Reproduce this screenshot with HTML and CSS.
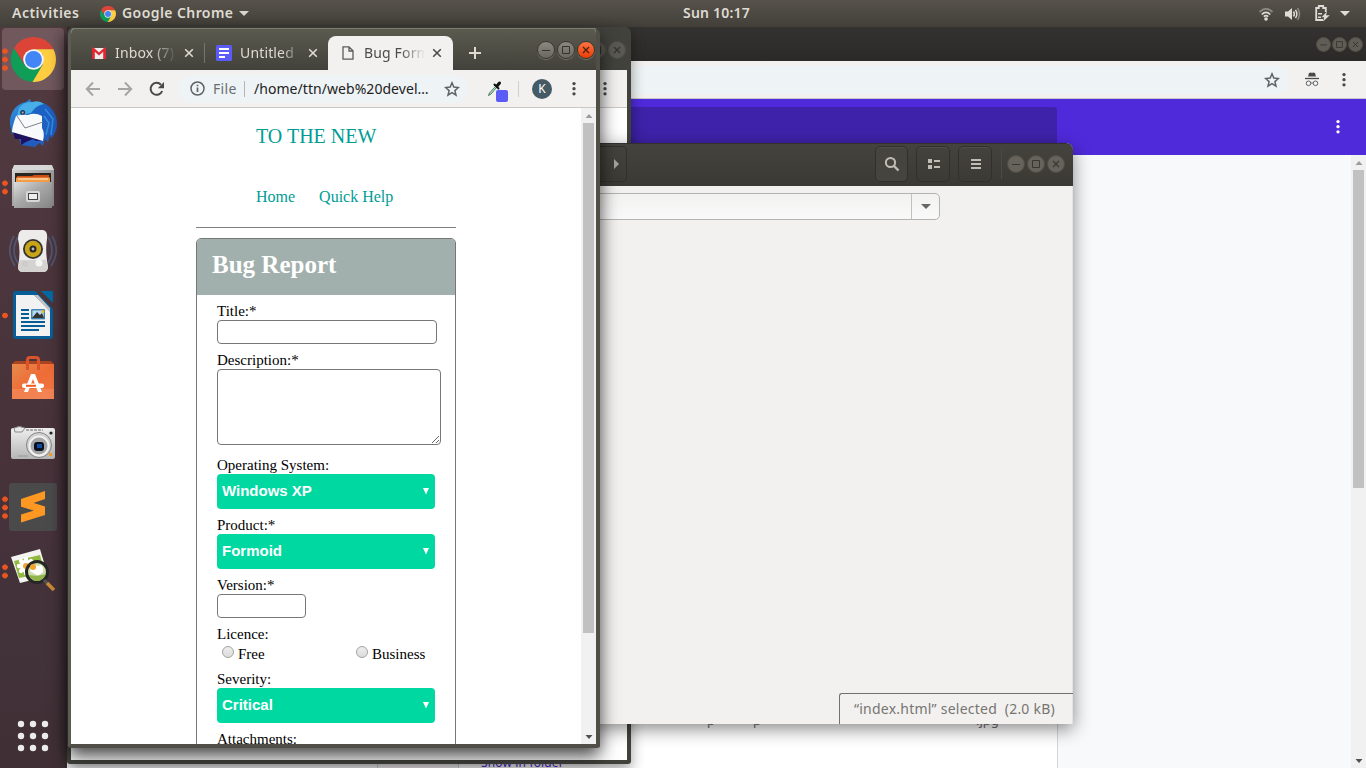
FILE: index.html
```html
<!DOCTYPE html>
<html lang="en">
<head>
<meta charset="utf-8">
<title>Bug Form</title>
<link rel="stylesheet" href="styles.css">
</head>
<body>
<svg width="0" height="0" class="defs" aria-hidden="true">
  <defs>
    <linearGradient id="metal" x1="0" y1="0" x2="1" y2="1"><stop offset="0" stop-color="#dcdcdc"/><stop offset=".45" stop-color="#a8a8a8"/><stop offset="1" stop-color="#858585"/></linearGradient>
    <linearGradient id="silver" x1="0" y1="0" x2="0" y2="1"><stop offset="0" stop-color="#efefef"/><stop offset="1" stop-color="#b5b5b5"/></linearGradient>
    <linearGradient id="bird" x1="0" y1="0" x2="1" y2="1"><stop offset="0" stop-color="#3ba5e4"/><stop offset=".4" stop-color="#1b62c4"/><stop offset="1" stop-color="#2858b8"/></linearGradient>
    <linearGradient id="bag" x1="0" y1="0" x2="1" y2="1"><stop offset="0" stop-color="#e58a4c"/><stop offset=".5" stop-color="#ef6c36"/><stop offset="1" stop-color="#f07a45"/></linearGradient>
    <symbol id="chrome" viewBox="0 0 48 48">
      <path fill="#db4437" d="M3.2 12A24 24 0 0 1 44.8 12Q46 14 46 13H24L14.5 29Z"/>
      <path fill="#0f9d58" d="M3.2 12A24 24 0 0 0 24 48L33.5 30H14.5Z"/>
      <path fill="#ffcd40" d="M45.3 13A24 24 0 0 1 23 48L33.5 30 34 19 24 13Z"/>
      <circle cx="24" cy="24" r="11" fill="#f4f5f7"/><circle cx="24" cy="24" r="9" fill="#4285f4"/>
    </symbol>
    <symbol id="close" viewBox="0 0 10 10"><path d="M1.2 1.2 8.8 8.8M8.8 1.2 1.2 8.8" fill="none" stroke="currentColor" stroke-width="1.6"/></symbol>
    <symbol id="star" viewBox="0 0 16 16"><path d="M8 1.8 9.8 6.1 14.4 6.5 10.9 9.6 12 14.1 8 11.6 4 14.1 5.1 9.6 1.6 6.5 6.2 6.1Z" fill="none" stroke="#5f6368" stroke-width="1.5"/></symbol>
    <symbol id="dots" viewBox="0 0 4 16"><circle cx="2" cy="2.6" r="1.65" fill="currentColor"/><circle cx="2" cy="7.7" r="1.65" fill="currentColor"/><circle cx="2" cy="12.8" r="1.65" fill="currentColor"/></symbol>
    <symbol id="min" viewBox="0 0 18 18"><path d="M5 9.5H13" stroke="currentColor"/></symbol>
    <symbol id="max" viewBox="0 0 18 18"><path d="M5.5 5.5H12.5V12.5H5.5Z" fill="none" stroke="currentColor"/></symbol>
    <symbol id="x" viewBox="0 0 18 18"><path d="M6 6 12 12M12 6 6 12" stroke="currentColor" stroke-width="1.2"/></symbol>
  </defs>
</svg>

<div class="desktop">
  <header class="panel">
    <span class="activities">Activities</span>
    <svg class="app-icon" viewBox="0 0 48 48"><use href="#chrome"/></svg>
    <span class="app-name">Google Chrome</span>
    <svg class="caret" viewBox="0 0 10 5"><path d="M0 0H10L5 5Z" fill="#d8d5cf"/></svg>
    <span class="clock">Sun 10:17</span>
    <div class="tray">
      <svg width="16" height="14" viewBox="0 0 16 14" fill="none"><path d="M1.5 5Q8-1.5 14.5 5" stroke="#8b8983" stroke-width="1.8"/><path d="M3.7 7.5Q8 3.2 12.3 7.5M5.8 9.7Q8 7.7 10.2 9.7" stroke="#dfdcd7" stroke-width="1.7"/><circle cx="8" cy="12" r="1.8" fill="#dfdcd7"/></svg>
      <svg width="16" height="14" viewBox="0 0 16 14" fill="none"><path d="M0 4.5H3L7 1V13L3 9.5H0Z" fill="#dfdcd7"/><path d="M8.5 4.5Q10.2 7 8.5 9.5M10.5 2.8Q13.2 7 10.5 11.2" stroke="#dfdcd7" stroke-width="1.5"/><path d="M12.6 1.2Q16.4 7 12.6 12.8" stroke="#8b8983" stroke-width="1.5"/></svg>
      <svg width="15" height="17" viewBox="0 0 15 17" fill="none"><path d="M8 15H1.2V3H3.8V1H8.2V3H10.8V7" stroke="#dfdcd7" stroke-width="1.8"/><path d="M3 8.7H7M3 12.2H6" stroke="#dfdcd7" stroke-width="1.6"/><path d="M12 6.5 6.5 12.2H9.2L8 16.5 14.8 10.2H11Z" fill="#dfdcd7"/></svg>
      <svg width="10" height="5" viewBox="0 0 10 5"><path d="M0 0H10L5 5Z" fill="#dfdcd7"/></svg>
    </div>
  </header>

  <nav class="dock">
    <div class="dock-item active three"><i></i><svg viewBox="0 0 48 48" class="i44"><use href="#chrome"/></svg></div>
    <div class="dock-item"><i></i><svg viewBox="0 0 48 48" class="i48">
      <path fill="url(#bird)" d="M1 26C0 12 9 4 17 3L21 0 22 3C38 1 49 12 48 27 47 34 44 38 42 39L41 36 39 43 36 40 34 47 30 44 26 48 12 46 10 39 6 40 7 35 3 35Z"/>
      <path fill="#20115e" d="M4 33 35 41 27 42 24 40 17 43 12 46 12 40 6 40Z"/>
      <path fill="#48aee8" d="M10 9Q15 2 24 3 30 1 35 5 27 6 22 14L12 16 7 20Z"/>
      <circle cx="13.7" cy="13.5" r="2.5" fill="#183d69"/><circle cx="13.7" cy="13.5" r="1" fill="#e0a67d"/>
      <path fill="#f8f9fb" d="M7 17Q14 15 19 16 26 13 33 17V29Q36 34 34 42L3 33Q3 28 7 17Z"/>
      <path fill="none" stroke="#7f858d" d="M8 17 16 29 34 23"/>
      <path d="M36 10 44 20 42 36M35 17 40 24 37 36" fill="none" stroke="#2e8fe0" stroke-width="1.5"/>
    </svg></div>
    <div class="dock-item two"><i></i><svg viewBox="0 0 48 48" class="i48">
      <path fill="url(#metal)" d="M3 7 6 2H42L45 7V43H3Z"/><path fill="#d8d8d8" d="M5 2H43L45 7H3Z"/>
      <path fill="#292521" d="M6 10H42V22H6Z"/><path fill="#cf4e15" d="M8 13H23L25 12H40V22H8Z"/><path fill="#f49b45" d="M7 14.5H41V22H7Z"/><path stroke="#fff0da" d="M9 16H39"/>
      <path fill="url(#metal)" d="M5 19H43V45H5Z"/><rect x="17" y="28" width="14" height="11" rx="2" fill="#d8d8d8"/><rect x="19.5" y="30.5" width="9" height="6" fill="#eee" stroke="#444"/>
    </svg></div>
    <div class="dock-item"><i></i><svg viewBox="0 0 48 48" class="i48">
      <path d="M5 9Q-4 24 6 39M9 10Q1 24 9 36M43 9Q52 24 42 39M39 10Q47 24 39 36" fill="none" stroke="#51566f" stroke-width="1.8"/>
      <path d="M13 3H34Q39 4 38 12 36 24 39 40 39 45 34 45H14Q9 45 9 40 12 24 9 12 9 4 13 3Z" fill="#edecea"/>
      <path d="M9 40Q10 34 12 33H37L39 40Q38 45 34 45H14Q9 45 9 40Z" fill="#d4d3d1"/>
      <circle cx="24" cy="22" r="10" fill="#333"/><circle cx="24" cy="22" r="8.2" fill="#c9a419"/><circle cx="24" cy="22" r="3.5" fill="#292929"/><circle cx="24" cy="22" r="1.4" fill="#bbb"/><circle cx="30" cy="36" r="3.5" fill="#f4f4f2"/><circle cx="16" cy="37" r="2" fill="none" stroke="#c4c4c4"/>
    </svg></div>
    <div class="dock-item one"><i></i><svg viewBox="0 0 48 48" class="i48">
      <path d="M7 0H26L44 18V45Q44 48 41 48H7Q4 48 4 45V3Q4 0 7 0Z" fill="#075e96"/><path d="M32 0H44V12Z" fill="#0369a3"/>
      <path d="M7 4H25L41 20V45H7Z" fill="#f2f2f2"/><path d="M25 4H29L41 17V21Z" fill="#c4c4c4"/>
      <path d="M12 19H20M12 23H20M12 27H20M12 31H36M12 35H36M12 39H30" stroke="#075e96" stroke-width="2"/>
      <rect x="22.8" y="18.8" width="12.5" height="9" fill="#b6dbef" stroke="#075e96"/><path d="M23 27 28 21 31 24 33 22 35 27Z" fill="#333"/><circle cx="34" cy="20.5" r="1.5" fill="#efb72b"/>
    </svg></div>
    <div class="dock-item"><i></i><svg viewBox="0 0 48 48" class="i48">
      <path d="M3 9 6 6H42L45 9V43H3Z" fill="#aa4420"/><path d="M3 9H45V44H3Z" fill="url(#bag)"/><path d="M3 34H45V44H3Z" fill="#f58d61" opacity=".6"/>
      <path d="M18.500 15V5Q18.500 2.500 21 2.500H27Q29.500 2.500 29.500 5V15" fill="none" stroke="#d9542a" stroke-width="3"/>
      <path d="M22 19H26L33 37H29L24 24 19 37H15Z" fill="#fff"/><rect x="13" y="28.500" width="22" height="4.500" rx="2" fill="#fff"/><path d="M17 30.800H27" stroke="#f05c1d" stroke-width="2"/>
    </svg></div>
    <div class="dock-item"><i></i><svg viewBox="0 0 48 48" class="i48">
      <rect x="2" y="9" width="44" height="31" rx="2" fill="url(#silver)"/><path d="M5 9Q10 6 16 9L13 13H6Z" fill="#e9e9e9" stroke="#888"/><path d="M17 11H34" stroke="#686868" stroke-dasharray="3 1"/>
      <circle cx="30" cy="26" r="12.500" fill="#d1d1d1" stroke="#858585"/><circle cx="30" cy="27" r="9.500" fill="#a5a5a5" stroke="#f2f2f2" stroke-width="2"/><rect x="25" y="23" width="10" height="9" rx="3" fill="#09101f"/><path d="M28 25H33V29H28Z" fill="#124aa0"/><circle cx="42" cy="14" r="1.600" fill="#222"/><path d="M40 34H43V37H40Z" fill="#efa12e"/><path d="M9 37H19" stroke="#999"/>
    </svg></div>
    <div class="dock-item three"><i></i><svg viewBox="0 0 48 48" class="i48">
      <rect width="48" height="48" rx="3" fill="#4a4a4a"/><path d="M12 16 36 8V16L23 20.5 36 25V32L12 39.5V31.5L25 27.5 12 23.5Z" fill="#ff9822"/><path d="M12 23.5V16L36 23.500V31Z" fill="#ff9822"/>
    </svg></div>
    <div class="dock-item two"><i></i><svg viewBox="0 0 48 48" class="i48">
      <path d="M2 10 31 2 39 29 11 36Z" fill="#f3f3ef"/><path d="M5 14 31 8 36 26 10 31Z" fill="#91b93f"/>
      <g stroke="#fff" stroke-width="4.4" stroke-linecap="round"><path d="M17 12V26M10 19H24M12 14 22 24M22 14 12 24"/></g><circle cx="17" cy="19" r="3" fill="#f1a42e"/>
      <circle cx="28" cy="25" r="10.5" fill="#cfdcad" stroke="#252725" stroke-width="3"/><path d="M21 24Q23 17 29 19 35 16 34 25L29 29Z" fill="#fff"/><circle cx="24" cy="20" r="3" fill="#efa32c"/><path d="M20 28Q28 30 37 27Q34 34 28 34 22 34 20 28Z" fill="#90b34a"/>
      <path d="M35 33 38 36" stroke="#555" stroke-width="3"/><path d="M38 36 45 43" stroke="#c88a35" stroke-width="3.500"/>
    </svg></div>
    <svg class="launcher" width="32" height="32" viewBox="0 0 32 32" fill="#ececec"><circle cx="4" cy="4" r="3.2"/><circle cx="16" cy="4" r="3.2"/><circle cx="28" cy="4" r="3.2"/><circle cx="4" cy="16" r="3.2"/><circle cx="16" cy="16" r="3.2"/><circle cx="28" cy="16" r="3.2"/><circle cx="4" cy="28" r="3.2"/><circle cx="16" cy="28" r="3.2"/><circle cx="28" cy="28" r="3.2"/></svg>
  </nav>

  <section class="window downloads">
    <div class="dl-title"><div class="controls small"><b><svg><use href="#min"/></svg></b><b><svg><use href="#max"/></svg></b><b><svg><use href="#x"/></svg></b></div></div>
    <div class="dl-toolbar">
      <div class="dl-address"><svg width="16" height="16"><use href="#star"/></svg></div>
      <svg class="incognito" width="14" height="15" viewBox="0 0 14 15"><path d="M4 1 6 .5 7 1 8 .5 10 1 11 4.5H3Z" fill="#494949"/><path d="M0 6.5H14" stroke="#494949" stroke-width="1.3"/><circle cx="3.5" cy="11.3" r="2.3" fill="none" stroke="#5f6368"/><circle cx="10.5" cy="11.3" r="2.3" fill="none" stroke="#5f6368"/><path d="M6 11H8" stroke="#5f6368"/></svg>
      <svg class="menu" width="4" height="16"><use href="#dots"/></svg>
    </div>
    <div class="dl-header"><div class="dl-search"></div><svg width="4" height="16"><use href="#dots"/></svg></div>
    <div class="dl-body">
      <div class="dl-card"><div class="dl-thumb"></div><div class="dl-info"><p><span>p</span><span>p</span><span>.jpg</span></p><a>Show in folder</a></div></div>
      <div class="scrollbar dl-scroll"><svg viewBox="0 0 7 4"><path d="M0 4 3.5 0 7 4Z" fill="#9b9b9b"/></svg><div></div><svg class="dn" viewBox="0 0 7 4"><path d="M0 0 3.5 4 7 0Z" fill="#505050"/></svg></div>
    </div>
  </section>

  <section class="window back">
    <div class="back-title"><div class="controls"><b><svg><use href="#max"/></svg></b><b><svg><use href="#x"/></svg></b></div></div>
    <div class="back-toolbar"><svg width="4" height="16"><use href="#dots"/></svg></div>
    <div class="back-page"></div>
  </section>

  <section class="window files">
    <div class="files-title">
      <div class="path-next"><svg width="5" height="10" viewBox="0 0 5 10"><path d="M0 0 5 5 0 10Z" fill="#a5a39d"/></svg></div>
      <div class="tool first"><svg width="16" height="16" viewBox="0 0 16 16" fill="none" stroke="#bfbdb5" stroke-width="2"><circle cx="6.5" cy="6.5" r="4.6"/><path d="M10 10 14.5 14.5" stroke-width="2.4"/></svg></div>
      <div class="tool"><svg width="14" height="12" viewBox="0 0 14 12" fill="#bfbdb5"><path d="M1 1H5V5H1ZM1 7H5V11H1ZM7 2H13V4H7ZM7 8H13V10H7Z"/></svg></div>
      <div class="tool"><svg width="10" height="10" viewBox="0 0 10 10" fill="#bfbdb5"><path d="M0 0H10V2H0ZM0 4H10V6H0ZM0 8H10V10H0Z"/></svg></div>
      <div class="rule"></div>
      <div class="controls"><b><svg><use href="#min"/></svg></b><b><svg><use href="#max"/></svg></b><b><svg><use href="#x"/></svg></b></div>
    </div>
    <div class="files-body">
      <div class="combo"><div class="combo-text"></div><div class="combo-btn"><svg width="10" height="5" viewBox="0 0 10 5"><path d="M0 0H10L5 5Z" fill="#686868"/></svg></div></div>
      <div class="status">“index.html” selected&nbsp; (2.0 kB)</div>
    </div>
  </section>

  <section class="window front">
    <div class="tabbar">
      <div class="tab t1"><svg width="14" height="12" viewBox="0 0 14 12"><path d="M0 1H14V12H0Z" fill="#eee"/><path d="M0 12V1Q0 0 1.5 .4L7 5.5 12.5 .4Q14 0 14 1V12H11.2V4.8L7 8.5 2.8 4.8V12Z" fill="#e0282e"/></svg><span class="fade">Inbox (7)</span><svg class="cl"><use href="#close"/></svg></div>
      <div class="sep"></div>
      <div class="tab t2"><svg width="16" height="16" viewBox="0 0 16 16"><rect width="16" height="16" rx="1.5" fill="#5b5bfa"/><path d="M3 4H13M3 8H13M3 12H9" stroke="#fff" stroke-width="2"/></svg><span class="fade">Untitled</span><svg class="cl"><use href="#close"/></svg></div>
      <div class="tab t3"><svg width="12" height="14" viewBox="0 0 12 14"><path d="M1 .8H7L11 4.8V13.2H1ZM7 .8V5H11" fill="none" stroke="#5b5b5b" stroke-width="1.3"/></svg><span class="fade">Bug Form</span><svg class="cl"><use href="#close"/></svg></div>
      <svg class="plus" width="12" height="12" viewBox="0 0 12 12"><path d="M6 0V12M0 6H12" stroke="#dedbd2" stroke-width="2"/></svg>
      <div class="controls"><b><svg><use href="#min"/></svg></b><b><svg><use href="#max"/></svg></b><b class="red"><svg><use href="#x"/></svg></b></div>
    </div>
    <div class="toolbar">
      <svg width="16" height="16" viewBox="0 0 16 16" fill="none" stroke="#a5a5a4" stroke-width="2"><path d="M15 8H2M8 1.5 1.8 8 8 14.5"/></svg>
      <svg class="fwd" width="16" height="16" viewBox="0 0 16 16" fill="none" stroke="#a5a5a4" stroke-width="2"><path d="M1 8H14M8 1.5 14.2 8 8 14.5"/></svg>
      <svg class="reload" width="16" height="16" viewBox="0 0 16 16"><path d="M13.2 10A6 6 0 1 1 12 3.7" fill="none" stroke="#494949" stroke-width="2"/><path d="M15 1V7.2H8.8Z" fill="#494949"/></svg>
      <div class="address">
        <svg width="15" height="15" viewBox="0 0 15 15"><circle cx="7.5" cy="7.5" r="6.5" fill="none" stroke="#5f6368" stroke-width="1.5"/><path d="M7.5 6.5V11M7.5 3.8V5.3" stroke="#5f6368" stroke-width="1.7"/></svg>
        <span class="scheme">File</span><span class="bar"></span><span class="url">/home/ttn/web%20devel…</span>
        <svg class="bookmark" width="16" height="16"><use href="#star"/></svg>
      </div>
      <svg class="picker" width="22" height="22" viewBox="0 0 22 22"><path d="M1.500 15.500 2.500 13 8.500 6.500 9.500 7.500 4 14Z" fill="#cfe8d8" stroke="#3d7a58"/><path d="M7.500 4.500 11.500 8.500" stroke="#111" stroke-width="2" stroke-linecap="round"/><path d="M10 6 12.500 3" stroke="#111" stroke-width="3" stroke-linecap="round"/><rect x="9" y="10" width="12" height="12" rx="2" fill="#5b5bf5"/></svg>
      <div class="bar2"></div><div class="avatar">K</div>
      <svg class="menu" width="4" height="16"><use href="#dots"/></svg>
    </div>
    <div class="page">
      <main>
        <div class="brand">TO THE NEW</div>
        <div class="links"><a>Home</a><a>Quick Help</a></div>
        <form class="bug">
          <h1>Bug Report</h1>
          <div class="fields">
            <label>Title:*</label><input type="text" class="title-in">
            <label>Description:*</label><textarea></textarea>
            <label>Operating System:</label><div class="pick"><span>Windows XP</span><svg width="6" height="7" viewBox="0 0 6 7"><path d="M0 0H6L3 6.5Z" fill="#fff"/></svg></div>
            <label>Product:*</label><div class="pick"><span>Formoid</span><svg width="6" height="7" viewBox="0 0 6 7"><path d="M0 0H6L3 6.5Z" fill="#fff"/></svg></div>
            <label>Version:*</label><input type="text" class="version-in">
            <label>Licence:</label><div class="radios"><span><i></i>Free</span><span><i></i>Business</span></div>
            <label>Severity:</label><div class="pick"><span>Critical</span><svg width="6" height="7" viewBox="0 0 6 7"><path d="M0 0H6L3 6.5Z" fill="#fff"/></svg></div>
            <label>Attachments:</label>
          </div>
        </form>
      </main>
      <div class="scrollbar"><svg viewBox="0 0 7 4"><path d="M0 4 3.5 0 7 4Z" fill="#9b9b9b"/></svg><div></div><svg class="dn" viewBox="0 0 7 4"><path d="M0 0 3.5 4 7 0Z" fill="#505050"/></svg></div>
    </div>
  </section>
</div>
</body>
</html>
```
FILE: styles.css
```css
* { box-sizing: border-box; }
body { margin: 0; font-family: "Noto Sans", sans-serif; }
svg { display: block; flex: none; }
.defs { position: absolute; }
.desktop { position: relative; width: 1366px; height: 768px; overflow: hidden; background: #47343a; }

/* top panel */
.panel { position: relative; height: 27px; display: flex; align-items: center; padding: 0 16px 0 12px; background: linear-gradient(#57534b, #423f39); color: #dfdbd2; font-size: 14px; font-weight: 600; line-height: 25px; white-space: nowrap; }
.activities { width: 88px; letter-spacing: .5px; padding-bottom: 2px; }
.app-icon { width: 16px; height: 16px; }
.app-name { width: 112px; margin-left: 6px; letter-spacing: .42px; padding-bottom: 2px; }
.caret { width: 10px; height: 5px; margin-left: 5px; }
.clock { position: absolute; left: 683px; top: 0; letter-spacing: .2px; }
.tray { margin-left: auto; display: flex; align-items: center; gap: 11px; }
.tray svg:nth-child(3) { margin-left: 3px; margin-right: -1px; }

/* dock */
.dock { width: 67px; height: 741px; display: flex; flex-direction: column; background: linear-gradient(#523a40, #47323a 60%, #42323a 82%, #403035); padding-top: 1px; position: relative; }
.dock-item { height: 62px; width: 62px; margin: 0 0 2px 2px; display: flex; align-items: center; border-radius: 4px; }
.dock-item.active { background: #70585d; }
.dock-item i { width: 7px; height: 25px; flex: none; }
.one i { background: radial-gradient(circle at 3px 12.5px, #e95420 2.5px, transparent 3.1px); }
.two i { background: radial-gradient(circle at 3px 4.2px, #e95420 2.5px, transparent 3.1px) 0 4px / 7px 8.4px repeat-y; height: 17px; }
.two i { background-position: 0 0; }
.three i { background: radial-gradient(circle at 3px 4.2px, #e95420 2.5px, transparent 3.1px) 0 0 / 7px 8.4px repeat-y; }
.i48 { width: 48px; height: 48px; }
.i44 { width: 45px; height: 45px; margin-left: 2px; }
.launcher { position: absolute; left: 17px; bottom: 16px; }

/* window frames */
.window { position: absolute; }
.controls { display: flex; gap: 2px; }
.controls b { width: 18px; height: 18px; border-radius: 50%; background: #605d56; border: 1px solid #504d46; color: #35332f; }
.controls svg { width: 18px; height: 18px; margin: -1px; }
.front .controls b { background: linear-gradient(#8a887f, #69675f); border-color: #393832; box-shadow: 0 1px #77756b; }
.front .controls .red { background: linear-gradient(#ff7443, #e93d05); color: #4c1c0b; }

.downloads { left: 67px; top: 27px; width: 1299px; height: 741px; display: flex; flex-direction: column; background: #f8f9fa; }
.dl-title { height: 34px; background: linear-gradient(#333230, #2b2a28); display: flex; justify-content: flex-end; align-items: center; padding-right: 3px; }
.small { gap: 1px; }
.small b { width: 15px; height: 15px; }
.small b svg { width: 15px; height: 15px; }
.dl-toolbar { height: 38px; background: #f2f1f0; border-bottom: 1px solid #c8c8c8; display: flex; align-items: center; padding-right: 20px; justify-content: flex-end; }
.dl-address { flex: 1; height: 28px; border-radius: 14px; background: #eef3f5; display: flex; justify-content: flex-end; align-items: center; padding-right: 9px; margin-right: 16px; }
.incognito { margin-right: 23px; }
.dl-toolbar, .back-toolbar, .toolbar .menu { color: #494949; }
.dl-header { height: 56px; flex: none; background: #4f2adb; display: flex; align-items: center; justify-content: space-between; padding-right: 26px; color: #fff; }
.dl-search { width: 990px; height: 48px; align-self: flex-end; background: #3e22a9; border-radius: 3px; }
.dl-body { flex: 1; display: flex; justify-content: space-between; overflow: hidden; background: #f8f9fb; }
.dl-card { margin-left: 310px; width: 681px; display: flex; background: #fff; border: 1px solid #d5d5da; border-width: 0 1px; }
.dl-thumb { width: 81px; border-right: 1px solid #d5d5da; background: #f8f5f9; }
.dl-info { padding: 555px 0 0 22px; font-size: 13px; color: #6b6b70; white-space: nowrap; }
.dl-info p { margin: 0; height: 45px; line-height: 20px; display: flex; }
.dl-info p span:nth-child(1) { margin-left: 226px; width: 46px; }
.dl-info p span:nth-child(2) { width: 223px; }
.dl-info a { display: block; line-height: 16px; color: #4f2adb; font-size: 12px; letter-spacing: .15px; }
.scrollbar { width: 15px; flex: none; background: #f1f1f1; padding: 6px 2px 5px; display: flex; flex-direction: column; align-items: center; }
.scrollbar svg { width: 8px; height: 4px; }
.scrollbar div { width: 11px; height: 510px; margin-top: 5px; background: #c1c1c1; }
.scrollbar .dn { margin-top: auto; }
.dl-scroll div { height: 318px; }

.back { left: 67px; top: 27px; width: 564px; height: 737px; border: solid #42423d; border-width: 1px 4px; border-bottom-width: 4px; border-radius: 6px 6px 3px 3px; background: #fff; box-shadow: 0 5px 14px #0006; }
.back-title { height: 42px; background: #42423d; display: flex; justify-content: flex-end; padding: 13px 1px 0; }
.back-title .controls b { background: #5a5953; }
.back-toolbar { height: 38px; background: #f2f1f0; border-bottom: 1px solid #c8c8c8; display: flex; justify-content: flex-end; align-items: center; padding-right: 20px; }

.files { left: 560px; top: 143px; width: 513px; height: 581px; border-radius: 7px 7px 0 0; background: #f2f1f0; box-shadow: 0 5px 18px #0007; }
.files-title { height: 43px; border-radius: 7px 7px 0 0; background: linear-gradient(#45433d, #3b3934); border-top: 1px solid #33312d; display: flex; align-items: center; padding: 0 8px 2px 0; }
.path-next { width: 67px; height: 36px; border: 1px solid #33312d; border-radius: 4px; display: flex; align-items: center; justify-content: flex-end; padding-right: 7px; }
.tool { width: 34px; height: 36px; margin-left: 8px; border: 1px solid #32302c; border-radius: 5px; box-shadow: inset 0 1px #514f49; display: flex; align-items: center; justify-content: center; }
.tool.first { margin-left: 248px; background: #46443e; }
.rule { width: 1px; height: 30px; background: #4c4a44; margin: 0 5px 0 9px; }
.files .controls b { background: #65635c; color: #393732; }
.files-title .tool svg { margin-left: 1px; }
.files-body { height: 538px; display: flex; flex-direction: column; justify-content: space-between; padding-top: 7px; box-shadow: inset -1px 0 #e4e3e1; }
.combo { width: 380px; height: 27px; display: flex; border: 1px solid #b3b4b1; border-radius: 5px; background: linear-gradient(#f2f2f1, #f9f9f9); }
.combo-text { flex: 1; border-right: 1px solid #c0c0bd; }
.combo-btn { width: 27px; display: flex; align-items: center; justify-content: center; }
.status { align-self: flex-end; width: 234px; height: 31px; border: solid #73716c; border-width: 1px 0 0 1px; border-radius: 3px 0 0; padding-left: 14px; line-height: 30px; font-size: 14px; letter-spacing: .23px; color: #777570; white-space: nowrap; }

/* front browser window */
.front { left: 68px; top: 28px; width: 532px; height: 720px; border: solid #504e46; border-width: 1px 4px 4px 3px; border-top-color: #7c7c70; border-left-color: #5b5c52; border-radius: 6px 6px 3px 3px; box-shadow: 0 8px 18px #000b; background: #fff; overflow: hidden; }
.tabbar { height: 41px; background: linear-gradient(#5a5a4f, #42423b); display: flex; align-items: flex-end; color: #dedbd2; font-size: 14px; }
.tab { height: 34px; display: flex; align-items: center; }
.tab .cl { width: 10px; height: 10px; }
.fade { white-space: nowrap; padding-bottom: 2px; letter-spacing: .15px; -webkit-mask-image: linear-gradient(90deg, #000 60%, transparent); mask-image: linear-gradient(90deg, #000 60%, transparent); }
.t1 { width: 133px; padding-left: 21px; }
.t1 .fade { width: 62px; margin: 0 7px 0 9px; }
.sep { width: 1px; height: 20px; background: #77766c; margin-bottom: 7px; }
.t2 { width: 123px; padding-left: 11px; }
.t2 .fade { width: 57px; margin: 0 11px 0 8px; -webkit-mask-image: linear-gradient(90deg, #000 75%, #0003); mask-image: linear-gradient(90deg, #000 75%, #0003); }
.t3 { width: 125px; padding-left: 14px; background: #f2f1f0; color: #4d4c49; border-radius: 8px 8px 0 0; }
.t3 .fade { width: 61px; overflow: hidden; margin: 0 7px 0 10px; }
.plus { margin: 0 0 11px 16px; }
.tabbar .controls { margin: 0 1px 11px auto; }
.toolbar { height: 38px; background: #f2f1f0; border-bottom: 1px solid #c8c8c8; display: flex; align-items: center; padding-left: 14px; }
.fwd { margin-left: 16px; }
.reload { margin-left: 16px; }
.address { width: 290px; height: 28px; margin-left: 13px; border-radius: 14px; background: #eef3f5; display: flex; align-items: center; padding-left: 12px; font-size: 14px; white-space: nowrap; }
.scheme { width: 29px; margin-left: 8px; color: #6a6e73; letter-spacing: .3px; }
.bar { width: 1px; height: 16px; background: #b4b7ba; margin: 0 9px 0 2px; }
.url { width: 177px; color: #222; letter-spacing: .05px; }
.bookmark { margin-left: 13px; }
.picker { margin: 4px 0 0 19px; }
.bar2 { width: 1px; height: 16px; background: #cfcfce; margin-left: 9px; }
.avatar { width: 20px; height: 20px; border-radius: 50%; background: #455a64; color: #fff; font-size: 12px; line-height: 20px; text-align: center; margin-left: 13px; }
.toolbar .menu { margin-left: 20px; }
.page { height: 636px; display: flex; overflow: hidden; font-family: "Liberation Serif", serif; }
main { width: 510px; padding-left: 125px; }
.brand { font-size: 20px; line-height: 24px; padding: 16px 0 0 60px; color: #009c95; }
.links { width: 260px; height: 80px; padding: 40px 0 0 60px; display: flex; gap: 24px; font-size: 16px; line-height: 18px; color: #009c95; border-bottom: 1px solid #808080; }
.bug { width: 260px; height: 700px; margin-top: 10px; border: 1px solid #777; border-radius: 5px; overflow: hidden; }
.bug h1 { margin: 0; height: 56px; padding: 12px 15px 0; background: #a1b0ac; color: #fff; font-size: 25px; line-height: 28px; }
.fields { padding: 8px 20px 0; display: flex; flex-direction: column; align-items: flex-start; font-size: 15px; color: #000; }
.fields label { height: 17px; line-height: 17px; }
.fields input, .fields textarea { flex: none; margin: 0 0 8px; border: 1px solid #777; border-radius: 4px; background: #fff; }
.title-in { width: 220px; height: 24px; }
.fields textarea { width: 224px; height: 76px; margin-bottom: 12px; margin-right: -10px; }
.version-in { width: 89px; height: 24px; }
.pick { width: 218px; height: 35px; margin-bottom: 8px; padding: 0 6px 0 5px; border-radius: 4px; background: #00d8a2; color: #fff; font: bold 15px "Liberation Sans", sans-serif; display: flex; align-items: center; justify-content: space-between; }
.pick span { padding-bottom: 2px; }
.radios { width: 218px; height: 20px; margin-bottom: 8px; display: flex; }
.radios span { flex: none; width: 134px; padding: 3px 0 0 5px; display: flex; line-height: 17px; }
.radios span + span { width: 84px; }
.radios i { flex: none; width: 12px; height: 12px; margin: 0 4px 0 0; border: 1px solid #a3a3a3; border-radius: 50%; background: linear-gradient(#ededed, #dcdcdc); }
```
